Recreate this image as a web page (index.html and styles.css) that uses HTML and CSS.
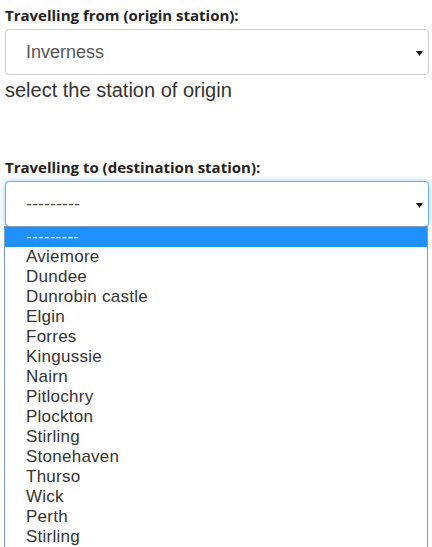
FILE: index.html
```html
<!DOCTYPE html>
<html lang="en">
<head>
  <meta charset="UTF-8">
  <meta name="viewport" content="width=device-width, initial-scale=1.0">
  <title>Journey planner</title>
  <link rel="stylesheet" href="styles.css">
</head>
<body>
  <form class="journey">
    <div class="field">
      <label class="field-label">Travelling from (origin station):</label>
      <div class="select">
        <span class="select-value">Inverness</span>
        <svg class="select-arrow" width="7" height="5" viewBox="0 0 7 5"><path d="M0 0h7L3.5 5z" fill="#111"/></svg>
      </div>
      <p class="help">select the station of origin</p>
    </div>

    <div class="field">
      <label class="field-label">Travelling to (destination station):</label>
      <div class="select select-focus">
        <span class="select-value">---------</span>
        <svg class="select-arrow" width="7" height="5" viewBox="0 0 7 5"><path d="M0 0h7L3.5 5z" fill="#111"/></svg>
      </div>
      <ul class="options">
        <li class="selected">---------</li>
        <li>Aviemore</li>
        <li>Dundee</li>
        <li>Dunrobin castle</li>
        <li>Elgin</li>
        <li>Forres</li>
        <li>Kingussie</li>
        <li>Nairn</li>
        <li>Pitlochry</li>
        <li>Plockton</li>
        <li>Stirling</li>
        <li>Stonehaven</li>
        <li>Thurso</li>
        <li>Wick</li>
        <li>Perth</li>
        <li>Stirling</li>
      </ul>
    </div>
  </form>
</body>
</html>
```

FILE: styles.css
```css
body {
  margin: 0;
  background: #fff;
  font-family: Arial, "Liberation Sans", sans-serif;
  color: #333;
}

.journey {
  padding: 6px 3px 0 5px;
}

.field {
  margin-bottom: 57px;
}

.field:last-child {
  margin-bottom: 0;
}

.field-label {
  display: block;
  margin-bottom: 5px;
  font-family: "Open Sans", sans-serif;
  font-weight: bold;
  font-size: 15px;
  line-height: 18px;
  color: #222;
}

.select {
  display: flex;
  align-items: center;
  justify-content: space-between;
  height: 46px;
  box-sizing: border-box;
  padding: 0 5px 0 20px;
  border: 1px solid #ccc;
  border-radius: 4px;
  background: #fff;
  font-size: 18px;
  color: #555;
}

.select-focus {
  border-color: #66afe9;
  box-shadow: 0 0 6px rgba(102, 175, 233, 0.6);
}

.select-arrow {
  margin-top: 2px;
}

.help {
  margin: 4px 0 0;
  font-size: 20px;
  line-height: 22px;
  color: #333;
}

.options {
  position: relative;
  margin: -1px 1px 0 -1px;
  padding: 0;
  list-style: none;
  background: #fff;
  border: 1px solid #7f9db9;
  border-bottom: 0;
}

.options li {
  height: 20px;
  line-height: 20px;
  padding-left: 21px;
  font-size: 17px;
  letter-spacing: 0.25px;
  color: #333;
}

.options li.selected {
  background: #1e90ff;
  color: #fff;
}
```
